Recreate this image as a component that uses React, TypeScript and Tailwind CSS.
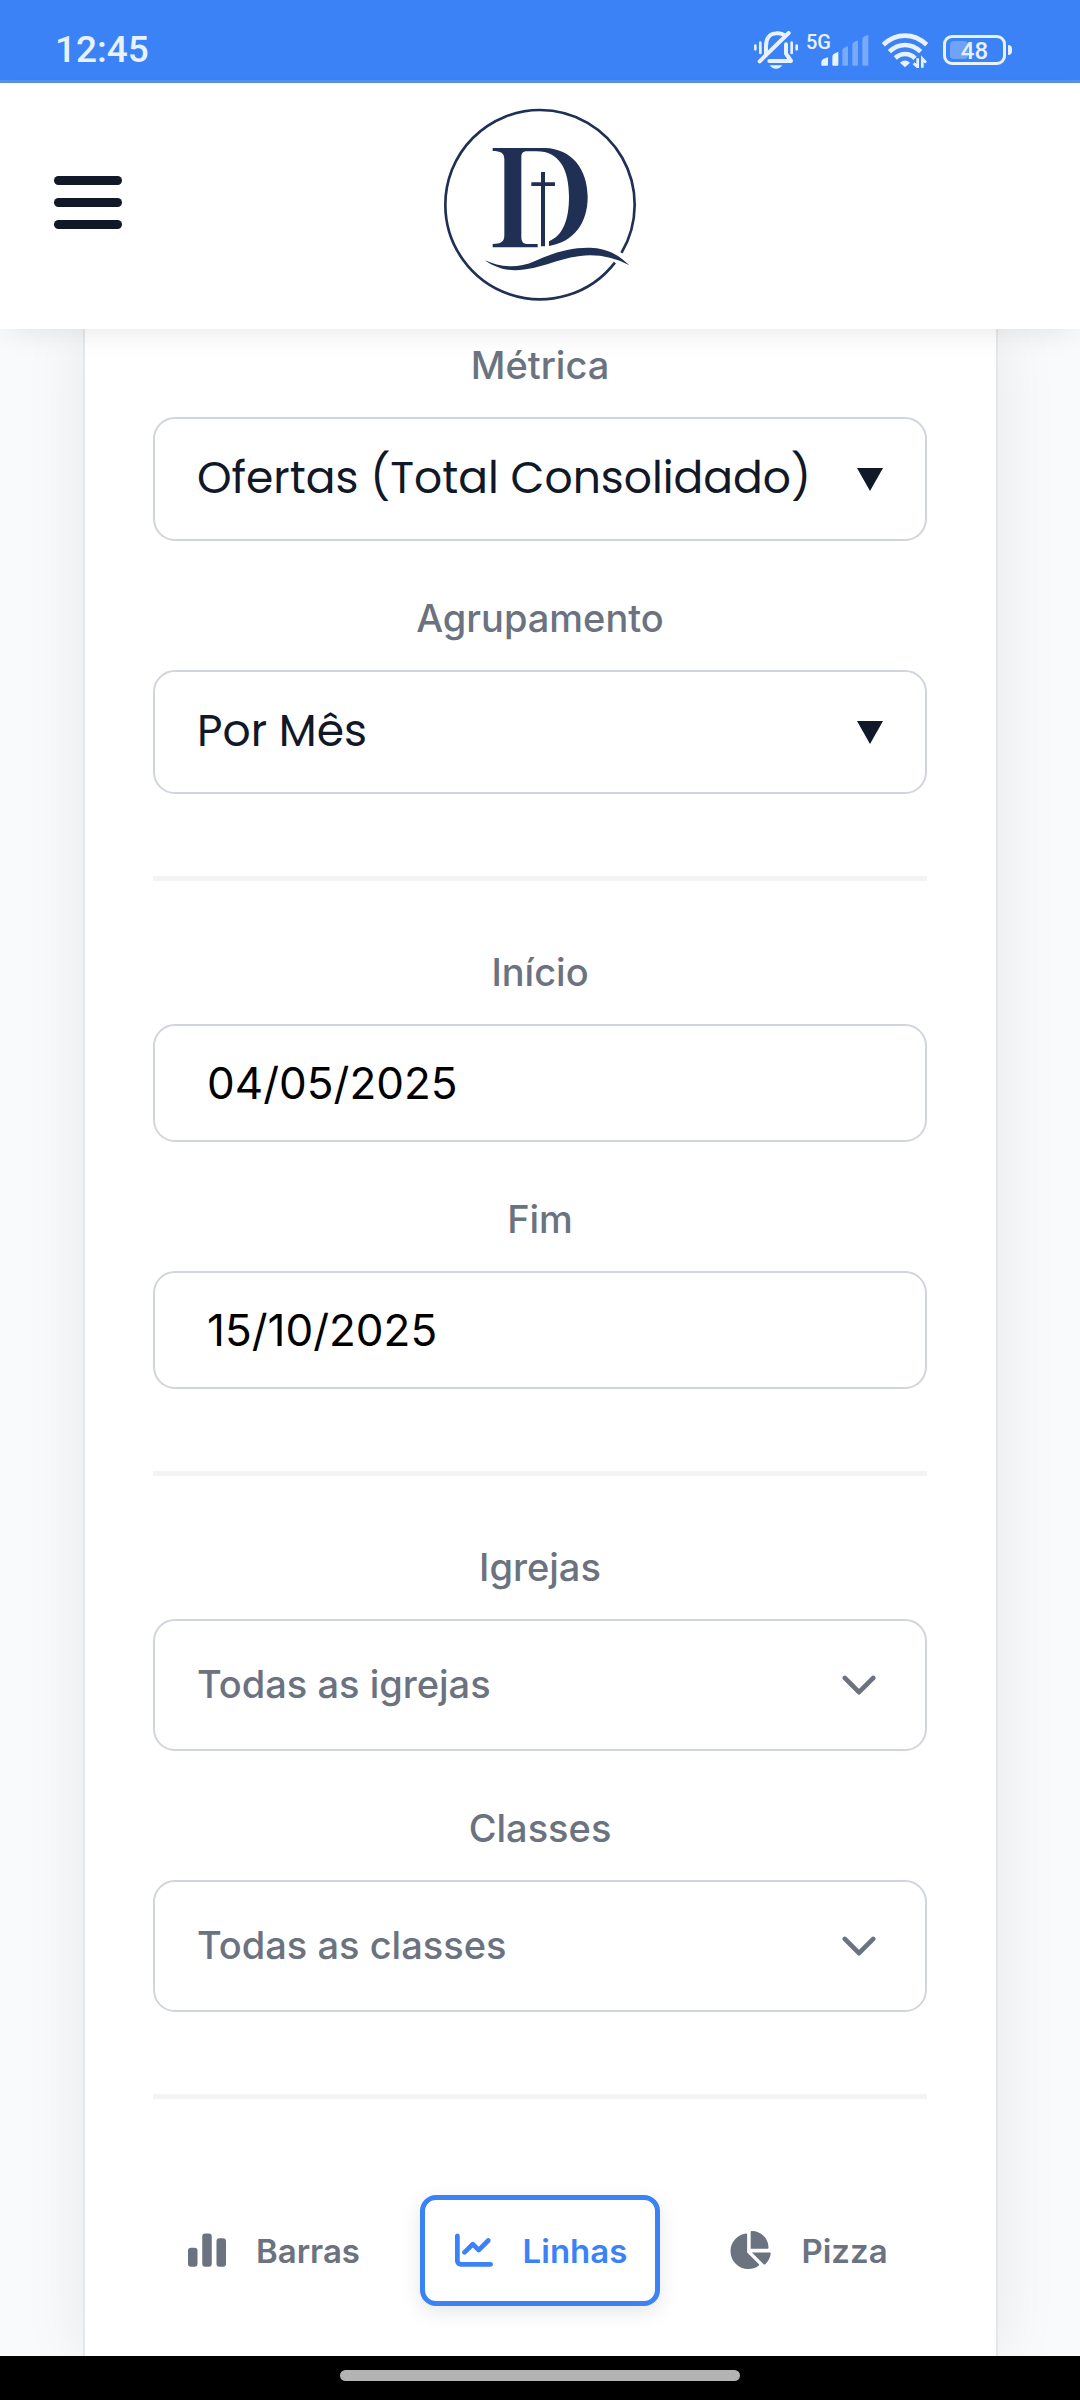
import { useState, type ReactNode } from 'react';

const fieldBox = 'w-full rounded-[22px] border-2 border-gray-300 bg-white';

function BellOffIcon() {
  return (
    <svg viewBox="0 0 132 114" className="h-[38px] w-11" fill="none" stroke="#e8f1fe" strokeLinecap="round" aria-hidden="true">
      <path d="M4 44V55M19 35V66M113 35V66M128 44V55" strokeWidth="8" />
      <path d="M36 71V45C36 21 48 8 66 7C78 5 87 9 92 13" strokeWidth="12" />
      <path d="M96 40V68L111 90H46" strokeWidth="12" strokeLinejoin="round" />
      <path d="M17 91L104 6" strokeWidth="12" />
      <path d="M47 103H85C80 110 74 113 66 113S52 110 47 103Z" fill="#e8f1fe" stroke="none" />
    </svg>
  );
}

function SignalIcon() {
  return (
    <svg viewBox="0 0 144 96" className="h-8 w-12" fill="#e8f1fe" aria-hidden="true">
      <path d="M1 85Q1 78 8 74L21 70V92Q21 95 18 95H4Q1 95 1 92ZM34 68Q34 63 38 60L52 53V92Q52 95 49 95H37Q34 95 34 92Z" />
      <path opacity=".36" d="M64 50Q64 45 68 42L81 36V92Q81 95 78 95H67Q64 95 64 92ZM94 32Q94 27 98 25L111 19V92Q111 95 108 95H97Q94 95 94 92ZM124 16Q124 11 128 8L142 2V92Q142 95 139 95H127Q124 95 124 92Z" />
    </svg>
  );
}

function WifiIcon() {
  return (
    <svg viewBox="0 0 138 105" className="h-[35px] w-[46px]" fill="none" stroke="#e8f1fe" strokeWidth="14" aria-hidden="true">
      <path d="M4 35Q34 8 69 8T134 35" />
      <path d="M22 56Q43 36 69 36T116 56" />
      <path d="M40 75Q53 63 69 63Q87 63 99 76" />
      <path d="M54 89Q69 76 84 89L69 103Z" fill="#e8f1fe" stroke="none" />
      <path d="M107 76V102L95 91M121 104V77L132 89" strokeWidth="8" />
    </svg>
  );
}

function Battery({ level }: { level: number }) {
  return (
    <div className="flex items-center gap-0.5">
      <div className="relative flex h-[30px] w-[63px] items-center justify-center rounded-[9px] border-3 border-[#e8f1fe]">
        <div className="absolute inset-y-[3px] left-[4px] rounded-[4px] bg-[#6fa3f8]" style={{ width: `${level / 1.5}%` }} />
        <span className="relative pt-0.5 text-[24px] leading-6 font-medium">{level}</span>
      </div>
      <div className="h-2.5 w-1 rounded-r-sm bg-[#e8f1fe]" />
    </div>
  );
}

function StatusBar() {
  return (
    <div className="flex h-[83px] items-center justify-between border-b-3 border-[#5790e9] bg-[#3b82f6] pt-5 pr-[68px] pl-[55px] font-['Roboto',sans-serif] text-[#e8f1fe]">
      <span className="text-[37px] leading-10 font-medium">12:45</span>
      <div className="flex items-center">
        <BellOffIcon />
        <span className="mb-4 ml-2 text-[20px] leading-5 font-medium">5G</span>
        <div className="-ml-2.5">
          <SignalIcon />
        </div>
        <div className="mr-[15px] ml-[13px]">
          <WifiIcon />
        </div>
        <Battery level={48} />
      </div>
    </div>
  );
}

function Logo() {
  return (
    <svg viewBox="0 -10 660 660" className="size-[220px]" fill="#203055" role="img" aria-label="Logo">
      <path d="M554.7 501.7A284 284 0 0 1 46 328A284 284 0 0 1 330 44A284 284 0 0 1 574.4 472.6" fill="none" stroke="#203055" strokeWidth="8" />
      <path d="M188 158H345C425 160 473 222 473 305C473 385 430 440 357 452V438C400 420 417 372 417 305C417 222 388 168 320 168H292C280 168 274 173 274 184V424C274 440 280 446 296 446H323V456H188V446C212 446 223 440 223 420V192C223 173 212 167 188 167Z" />
      <path d="M333 230H345V261H375V272H345V453H333V272H304V261H333Z" />
      <path d="M165 495C205 514 260 522 315 497C370 472 430 454 490 458C540 461 575 487 598 510C560 490 520 480 480 480C400 480 330 525 255 525C215 525 185 510 165 495Z" />
    </svg>
  );
}

function Header() {
  return (
    <header className="relative z-10 grid h-[246px] grid-cols-[1fr_auto_1fr] items-center bg-white px-[54px] pb-2 shadow-[0_10px_27px_-8px_rgba(0,0,0,0.1)]">
      <button type="button" aria-label="Abrir menu" className="flex w-[68px] flex-col gap-[13px]">
        <span className="h-[9px] rounded-full bg-[#111827]" />
        <span className="h-[9px] rounded-full bg-[#111827]" />
        <span className="h-[9px] rounded-full bg-[#111827]" />
      </button>
      <Logo />
    </header>
  );
}

function Field({ id, label, children }: { id: string; label: string; children: ReactNode }) {
  return (
    <div className="flex flex-col gap-7">
      <label htmlFor={id} className="text-center text-[38px] leading-[48px] font-medium text-[#6b7280]">
        {label}
      </label>
      {children}
    </div>
  );
}

function SelectField({ id, label, options }: { id: string; label: string; options: string[] }) {
  return (
    <Field id={id} label={label}>
      <div className="relative">
        <select id={id} className={`${fieldBox} h-[124px] appearance-none pr-24 pb-0.5 pl-[42px] font-['Poppins','Inter',sans-serif] text-[44px] text-[#111827]`}>
          {options.map((o) => (
            <option key={o}>{o}</option>
          ))}
        </select>
        <svg viewBox="0 0 26 23" className="pointer-events-none absolute top-[51px] right-11 h-[23px] w-[26px]" fill="#111827" aria-hidden="true">
          <path d="M0 0H26L13 23Z" />
        </svg>
      </div>
    </Field>
  );
}

function DateField({ id, label, value }: { id: string; label: string; value: string }) {
  return (
    <Field id={id} label={label}>
      <input id={id} type="text" inputMode="numeric" defaultValue={value} className={`${fieldBox} h-[118px] px-[52px] text-[44px] text-black`} />
    </Field>
  );
}

function PickerField({ id, label, placeholder }: { id: string; label: string; placeholder: string }) {
  return (
    <Field id={id} label={label}>
      <button id={id} type="button" className={`${fieldBox} flex h-[132px] items-center justify-between pr-[47px] pb-0.5 pl-[42px] text-[38px] font-medium text-[#6b7280]`}>
        {placeholder}
        <svg viewBox="0 14 512 512" className="size-[38px]" fill="none" stroke="currentColor" strokeWidth="64" strokeLinecap="round" strokeLinejoin="round" aria-hidden="true">
          <path d="M64 188L256 380L448 188" />
        </svg>
      </button>
    </Field>
  );
}

function Section({ children }: { children: ReactNode }) {
  return <div className="flex flex-col gap-[53px] border-b-5 border-gray-100 pb-[82px]">{children}</div>;
}

const chartTypes = [
  {
    name: 'Barras',
    box: '0 0 512 512',
    size: 'h-[38px] w-[38px]',
    path: 'M40 224H88A40 40 0 0 1 128 264V440A40 40 0 0 1 88 480H40A40 40 0 0 1 0 440V264A40 40 0 0 1 40 224ZM232 32H280A40 40 0 0 1 320 72V440A40 40 0 0 1 280 480H232A40 40 0 0 1 192 440V72A40 40 0 0 1 232 32ZM424 96H472A40 40 0 0 1 512 136V440A40 40 0 0 1 472 480H424A40 40 0 0 1 384 440V136A40 40 0 0 1 424 96Z',
  },
  {
    name: 'Linhas',
    box: '0 0 512 512',
    size: 'h-[38px] w-[38px]',
    path: 'M64 64c0-17.7-14.3-32-32-32S0 46.3 0 64V400c0 44.2 35.8 80 80 80H480c17.7 0 32-14.3 32-32s-14.3-32-32-32H80c-8.8 0-16-7.2-16-16V64zm406.6 86.6c12.5-12.5 12.5-32.8 0-45.3s-32.8-12.5-45.3 0L320 210.7l-57.4-57.4c-12.5-12.5-32.8-12.5-45.3 0l-112 112c-12.5 12.5-12.5 32.8 0 45.3s32.8 12.5 45.3 0L240 221.3l57.4 57.4c12.5 12.5 32.8 12.5 45.3 0l128-128z',
  },
  {
    name: 'Pizza',
    box: '0 0 576 512',
    size: 'h-[38px] w-[43px]',
    path: 'M304 240V16.6c0-9 7-16.6 16-16.6C443.7 0 544 100.3 544 224c0 9-7.6 16-16.6 16H304zM32 272C32 150.7 122.1 50.3 239 34.3c9.2-1.3 17 6.1 17 15.4V288L412.5 444.5c6.7 6.7 6.2 17.7-1.5 23.1C371.8 495.6 323.8 512 272 512C139.5 512 32 404.6 32 272zm526.4 16c9.3 0 16.6 7.8 15.4 17c-7.7 55.9-34.6 105.6-73.9 142.3c-6 5.6-15.4 5.2-21.2-.7L320 288H558.4z',
  },
];

function ChartTypePicker() {
  const [active, setActive] = useState('Linhas');
  return (
    <div className="mt-24 grid grid-cols-3 gap-[27px]">
      {chartTypes.map(({ name, box, size, path }) => (
        <button
          key={name}
          type="button"
          aria-pressed={active === name}
          onClick={() => setActive(name)}
          className={`flex h-[111px] items-center justify-center gap-[30px] rounded-2xl border-5 pt-0.5 pl-0.5 text-[33px] font-semibold ${
            active === name ? 'border-[#3b82f6] bg-white text-[#3b82f6] shadow-[0_6px_20px_rgba(0,0,0,0.1)]' : 'border-transparent text-[#6b7280]'
          }`}
        >
          <svg viewBox={box} className={`${size} mb-1 shrink-0`} fill="currentColor" aria-hidden="true">
            <path d={path} />
          </svg>
          {name}
        </button>
      ))}
    </div>
  );
}

export default function App() {
  return (
    <div className="flex min-h-screen flex-col overflow-hidden bg-gray-50 font-['Inter',sans-serif]">
      <StatusBar />
      <Header />
      <main className="flex flex-1 pr-[82px] pl-[83px]">
        <form className="flex flex-1 flex-col border-x-2 border-gray-200 bg-white pt-3 pr-[69px] pb-[50px] pl-[68px] shadow-[0_0_60px_rgba(0,0,0,0.08)]">
          <div className="flex flex-col gap-[67px]">
            <Section>
              <SelectField id="metrica" label="Métrica" options={['Ofertas (Total Consolidado)']} />
              <SelectField id="agrupamento" label="Agrupamento" options={['Por Mês']} />
            </Section>
            <Section>
              <DateField id="inicio" label="Início" value="04/05/2025" />
              <DateField id="fim" label="Fim" value="15/10/2025" />
            </Section>
            <Section>
              <PickerField id="igrejas" label="Igrejas" placeholder="Todas as igrejas" />
              <PickerField id="classes" label="Classes" placeholder="Todas as classes" />
            </Section>
          </div>
          <ChartTypePicker />
        </form>
      </main>
      <div className="relative z-10 flex h-11 justify-center bg-black pt-3.5">
        <div className="h-[11px] w-[37%] rounded-full bg-[#b3b3b3]" />
      </div>
    </div>
  );
}
